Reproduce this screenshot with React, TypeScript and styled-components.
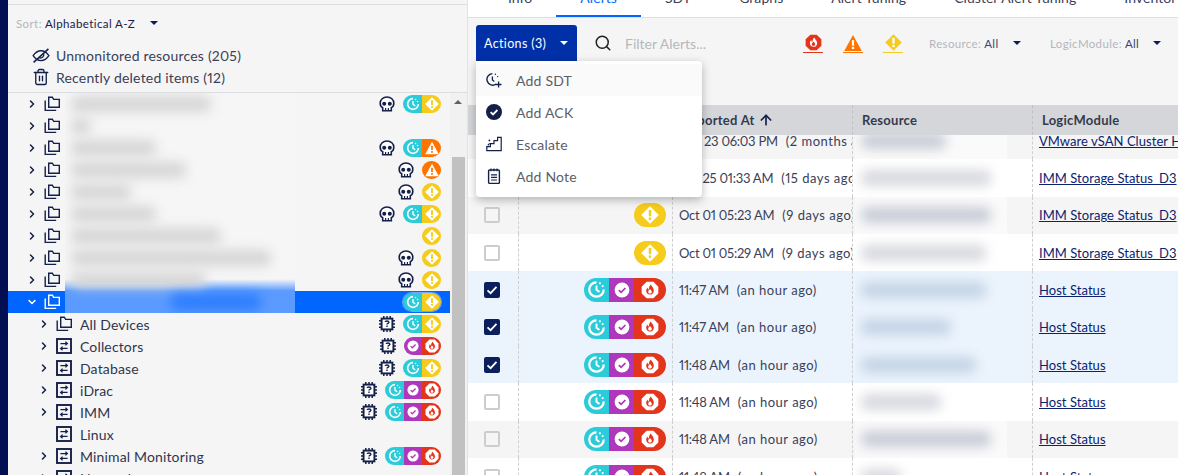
import React from "react";
import styled, { createGlobalStyle } from "styled-components";
import { ArrowUp, ChevronDown, ChevronRight, Search, Trash2 } from "lucide-react";

const NAVY = "#14204a";
const TEAL = "#2ccbd9";
const PURPLE = "#ae37bc";
const RED = "#e2351b";
const YELLOW = "#f6cc1c";
const ORANGE = "#ff7300";

const GlobalStyle = createGlobalStyle`
  html, body {
    margin: 0;
    padding: 0;
    background: #fff;
    overflow: hidden;
  }
  * {
    box-sizing: border-box;
  }
`;

const Page = styled.div`
  width: 1178px;
  height: 475px;
  display: flex;
  overflow: hidden;
  font-family: "Lato", "Open Sans", sans-serif;
  font-variant-numeric: proportional-nums;
  color: ${NAVY};
`;

const SideNav = styled.div`
  width: 8px;
  flex: none;
  background: #020f52;
`;

const LeftPanel = styled.div`
  width: 460px;
  flex: none;
  display: flex;
  flex-direction: column;
  background: #f5f5f5;
  padding-top: 4px;
  border-right: 1px solid #e3e3e3;
`;

const SortRow = styled.div`
  height: 38px;
  border-top: 1px solid #dcdde0;
  padding: 0 0 1px 8px;
  display: flex;
  align-items: center;
  font-size: 11.5px;
  letter-spacing: 0.4px;
`;

const FilterLabel = styled.span`
  color: #b4b6bc;
  margin-right: 3px;
`;

const Caret = styled.span<{ $gap: number; $color?: string }>`
  width: 0;
  height: 0;
  margin-left: ${(p) => p.$gap}px;
  border-left: 4px solid transparent;
  border-right: 4px solid transparent;
  border-top: 4px solid ${(p) => p.$color || "#0b1c5c"};
`;

const SpecialList = styled.div`
  height: 51px;
  padding: 2px 0 0 24px;
  border-bottom: 1px solid #dcdde0;
`;

const SpecialItem = styled.div`
  height: 22px;
  display: flex;
  align-items: center;
  gap: 6px;
  font-size: 14px;
  letter-spacing: 0.2px;
  color: #3a4058;
`;

const TreeWrap = styled.div`
  flex: 1;
  display: flex;
  min-height: 0;
  overflow: hidden;
`;

const Tree = styled.div`
  width: 442px;
  flex: none;
  position: relative;
`;

const TreeRow = styled.div<{ $selected?: boolean; $depth?: number }>`
  height: 22px;
  display: flex;
  align-items: center;
  padding: 0 9px 0 ${(p) => 18 + (p.$depth || 0) * 12}px;
  background: ${(p) => (p.$selected ? "#0066ff" : "transparent")};
  color: ${(p) => (p.$selected ? "#fff" : NAVY)};
`;

const Chevron = styled.span`
  width: 12px;
  height: 12px;
  flex: none;
  display: flex;
  margin-right: 6px;
  color: inherit;
`;

const RowIcon = styled.span`
  width: 16px;
  height: 16px;
  flex: none;
  display: flex;
`;

const RowName = styled.span`
  margin-left: 8px;
  font-size: 14px;
  letter-spacing: 0.15px;
  color: #2f3550;
`;

const RowStatus = styled.div`
  margin-left: auto;
  display: flex;
  align-items: center;
  gap: 8px;
`;

const StatusIcon = styled.span`
  width: 16px;
  height: 16px;
  display: flex;
`;

const Pill = styled.div<{ $ring?: boolean }>`
  display: flex;
  border-radius: 12px;
  overflow: hidden;
  ${(p) => (p.$ring ? "box-shadow: 0 0 0 1px #6fa6ff;" : "")}
`;

const Segment = styled.span<{ $w: number; $h: number; $bg: string }>`
  width: ${(p) => p.$w}px;
  height: ${(p) => p.$h}px;
  background: ${(p) => p.$bg};
  display: flex;
  align-items: center;
  justify-content: center;
`;

/* the names that are smudged out in the screenshot */
const BlurPatch = styled.div`
  position: absolute;
  left: 57px;
  top: 0;
  width: 230px;
  height: 220px;
  overflow: hidden;
  background: linear-gradient(
    to bottom,
    #f6f6f6 0,
    #f6f6f6 186px,
    #a9c9fb 192px,
    #5b9bff 198px,
    #5b9bff 220px
  );
`;

const BlurRow = styled.div`
  height: 22px;
  display: flex;
  align-items: center;
  padding-left: 6px;
`;

const Smudge = styled.div<{ $color?: string }>`
  height: 16px;
  background: ${(p) => p.$color || "#d6d6d6"};
  filter: blur(6px);
  border-radius: 6px;
`;

const Scrollbar = styled.div`
  width: 17px;
  flex: none;
  position: relative;
  background: #f1f1f1;
`;

const ScrollArrow = styled.span`
  position: absolute;
  left: 4px;
  top: 7px;
  width: 0;
  height: 0;
  border-left: 4px solid transparent;
  border-right: 4px solid transparent;
  border-bottom: 4px solid #606060;
`;

const ScrollThumb = styled.div`
  position: absolute;
  left: 2px;
  top: 64px;
  bottom: 0;
  width: 13px;
  background: #c1c1c1;
`;

const RightPane = styled.div`
  flex: 1;
  min-width: 0;
  display: flex;
  flex-direction: column;
  position: relative;
  overflow: hidden;
`;

const Tabs = styled.div`
  height: 18px;
  flex: none;
  display: flex;
  padding-left: 16px;
  background: #fff;
  border-bottom: 1px solid #dcdfe6;
  white-space: nowrap;
`;

const Tab = styled.div<{ $active?: boolean }>`
  height: 32px;
  margin-top: -15px;
  padding: 3px 24px 0;
  line-height: 20px;
  font-size: 14px;
  letter-spacing: 0.05px;
  color: ${(p) => (p.$active ? "#0066ff" : "#3a4058")};
  border-bottom: 2px solid ${(p) => (p.$active ? "#0066ff" : "transparent")};
`;

const Toolbar = styled.div`
  height: 87px;
  flex: none;
  padding: 7px 0 0 8px;
  display: flex;
  align-items: flex-start;
  background: #f5f5f5;
`;

const ActionsButton = styled.div`
  width: 101px;
  height: 36px;
  flex: none;
  display: flex;
  align-items: center;
  padding-left: 8px;
  border-radius: 3px 3px 0 0;
  background: #0030a8;
  color: #fff;
  font-size: 12.5px;
  letter-spacing: 0.35px;
`;

const SearchBox = styled.div`
  height: 36px;
  display: flex;
  align-items: center;
  margin-left: 17px;
  width: 209px;
  color: #b7b8bc;
  font-size: 14px;
  gap: 13px;
`;

const SeverityGroup = styled.div`
  display: flex;
  gap: 20px;
  margin-right: 26px;
`;

const SeverityFilter = styled.div<{ $color: string }>`
  width: 20px;
  height: 28px;
  display: flex;
  align-items: center;
  justify-content: center;
  border-bottom: 1px solid ${(p) => p.$color};
  padding-top: 8px;
`;

const Dropdown = styled.div<{ $width: number }>`
  width: ${(p) => p.$width}px;
  height: 36px;
  display: flex;
  align-items: center;
  font-size: 11.5px;
  letter-spacing: 0.35px;
  color: #3a4770;
  white-space: nowrap;
`;

const ActionsMenu = styled.div`
  position: absolute;
  left: 8px;
  top: 61px;
  width: 226px;
  height: 136px;
  padding: 3px 0;
  z-index: 5;
  background: #fff;
  border-radius: 0 4px 4px 4px;
  box-shadow: 0 3px 10px rgba(0, 0, 0, 0.28);
`;

const MenuItem = styled.div<{ $hover?: boolean }>`
  height: 32px;
  display: flex;
  align-items: center;
  gap: 14px;
  padding-left: 10px;
  font-size: 14px;
  letter-spacing: 0.2px;
  color: #5b5e68;
  background: ${(p) => (p.$hover ? "#fafafa" : "transparent")};
`;

const TableHead = styled.div`
  height: 30px;
  flex: none;
  display: grid;
  grid-template-columns: 50px 154px 180px 180px 1fr;
  background: #d5d6d9;
  position: relative;
  z-index: 1;
`;

const HeadCell = styled.div<{ $dashed?: boolean }>`
  display: flex;
  align-items: center;
  gap: 3px;
  padding-left: 9px;
  font-size: 13px;
  font-weight: 700;
  letter-spacing: 0.25px;
  color: #333a4d;
  border-left: ${(p) => (p.$dashed ? "1px dashed #bfc0c4" : "none")};
  white-space: nowrap;
`;

const TableBody = styled.div`
  margin-top: -13px;
`;

type Tone = "white" | "grey" | "selected";

const toneBg: Record<Tone, string> = { white: "#fff", grey: "#f5f5f5", selected: "#ebf4fd" };
const tonePatch: Record<Tone, string> = { white: "#fff", grey: "#fafafa", selected: "#ebf4fd" };
const toneSmudge: Record<Tone, string> = { white: "#d8d9df", grey: "#c9ccd7", selected: "#c4d3e5" };

const Row = styled.div<{ $tone: Tone }>`
  height: 37.33px;
  display: grid;
  grid-template-columns: 50px 154px 180px 180px 1fr;
  background: ${(p) => toneBg[p.$tone]};
`;

const Cell = styled.div<{ $dashed?: boolean; $end?: boolean; $pad?: number }>`
  display: flex;
  align-items: center;
  min-width: 0;
  overflow: hidden;
  white-space: nowrap;
  padding: 0 ${(p) => (p.$end ? 6 : 0)}px 0 ${(p) => p.$pad ?? 0}px;
  justify-content: ${(p) => (p.$end ? "flex-end" : "flex-start")};
  border-left: ${(p) => (p.$dashed ? "1px dashed #cfcfcf" : "none")};
  font-size: 13px;
  letter-spacing: 0.5px;
  color: #3a4058;
`;

const ResourcePatch = styled.div<{ $tone: Tone }>`
  width: 152px;
  height: 100%;
  margin-left: 2px;
  padding-left: 6px;
  display: flex;
  align-items: center;
  overflow: hidden;
  background: ${(p) => tonePatch[p.$tone]};
`;

const Box = styled.span<{ $checked?: boolean }>`
  width: 16px;
  height: 16px;
  margin-left: 16px;
  border-radius: 2px;
  display: flex;
  align-items: center;
  justify-content: center;
  border: 2px solid ${(p) => (p.$checked ? "#0a1f5c" : "#cdcdcd")};
  background: ${(p) => (p.$checked ? "#0a1f5c" : "transparent")};
`;

const ModuleLink = styled.a`
  color: #0b2370;
  letter-spacing: 0.05px;
  text-decoration: underline;
`;

const AlertTime = styled.span`
  margin-right: 8px;
  letter-spacing: -0.25px;
`;

const IconSvg = styled.svg.attrs({ viewBox: "0 0 16 16", fill: "none" })<{ $size?: number }>`
  width: ${(p) => p.$size || 16}px;
  height: ${(p) => p.$size || 16}px;
  flex: none;
`;

const FolderIcon = ({ color }: { color: string }) => (
  <IconSvg stroke={color} strokeWidth="1.4">
    <path d="M4.7 1.2h3.6l1.4 2.2h5.6v7.8H4.7z" />
    <path d="M1.2 4.6v9.8h11" />
  </IconSvg>
);

const GroupIcon = () => (
  <IconSvg stroke={NAVY}>
    <rect x="1" y="1" width="14" height="14" strokeWidth="1.9" />
    <path d="M4.4 5.6h7M9.4 3.8 11.4 5.6 9.4 7.4M11.6 10.4h-7M6.6 8.6l-2 1.8 2 1.8" strokeWidth="1.2" />
  </IconSvg>
);

const SkullIcon = () => (
  <IconSvg>
    <path
      d="M8 1C4.1 1 1.2 3.6 1.2 7.3c0 2.1.8 3.6 2.5 4.5v2.9h8.6v-2.9c1.7-.9 2.5-2.4 2.5-4.5C14.8 3.6 11.9 1 8 1z"
      fill="#fff"
      stroke={NAVY}
      strokeWidth="1.6"
    />
    <circle cx="5.2" cy="7.8" r="2" fill={NAVY} />
    <circle cx="10.8" cy="7.8" r="2" fill={NAVY} />
    <path d="M6.6 12v2.6M9.4 12v2.6" stroke={NAVY} strokeWidth="1.2" />
  </IconSvg>
);

const ChipIcon = () => (
  <IconSvg>
    <rect x="2.6" y="2.6" width="10.8" height="10.8" fill="#fff" stroke={NAVY} strokeWidth="1.9" />
    <path
      d="M4.8 0v2.6M8 0v2.6M11.2 0v2.6M4.8 13.4V16M8 13.4V16M11.2 13.4V16M0 4.8h2.6M0 8h2.6M0 11.2h2.6M13.4 4.8H16M13.4 8H16M13.4 11.2H16"
      stroke={NAVY}
      strokeWidth="1.5"
    />
    <path d="M6.2 6c0-.7.7-1 1.8-1s1.9.4 1.9 1.2c0 1.2-1.9 1.2-1.9 2.4" stroke={NAVY} strokeWidth="1.4" />
    <path d="M8 9.6v1.5" stroke={NAVY} strokeWidth="1.4" />
  </IconSvg>
);

const SdtGlyph = ({ size }: { size: number }) => (
  <IconSvg $size={size} stroke="#fff">
    <path d="M8 1.9a6.1 6.1 0 1 0 6.1 6.1" strokeWidth="1.9" />
    <path d="M8 4.6v3.7l2.5 1.9" strokeWidth="1.6" />
    <circle cx="10.9" cy="2.8" r=".9" fill="#fff" stroke="none" />
    <circle cx="13.2" cy="5.1" r=".9" fill="#fff" stroke="none" />
  </IconSvg>
);

const AckGlyph = ({ size }: { size: number }) => (
  <IconSvg $size={size}>
    <circle cx="8" cy="8" r="7.4" fill="#fff" />
    <path d="M4.8 8.2 7.1 10.4 11.4 6" stroke={PURPLE} strokeWidth="1.7" />
  </IconSvg>
);

const FireGlyph = ({ size, bg, fg }: { size: number; bg: string; fg: string }) => (
  <IconSvg $size={size}>
    <path d="M5 .6h6L15.4 5v6L11 15.4H5L.6 11V5z" fill={bg} />
    <path
      d="M8.8 3.2c.4 1.6 2.6 2.7 2.6 5.4 0 2-1.5 3.5-3.4 3.5S4.6 10.6 4.6 8.7c0-1.2.5-2.2 1.2-3 .1 1 .5 1.6 1.1 1.9.1-1.6.6-3.3 1.9-4.4zM8 7.4c-1 .7-1.6 1.5-1.6 2.3 0 .9.7 1.5 1.6 1.5s1.6-.6 1.6-1.5c0-.8-.7-1.6-1.6-2.3z"
      fill={fg}
      fillRule="evenodd"
    />
  </IconSvg>
);

const WarnGlyph = ({ size, bg, fg }: { size: number; bg: string; fg: string }) => (
  <IconSvg $size={size}>
    <path d="M8 .8 15.8 15H.2z" fill={bg} strokeLinejoin="round" />
    <path d="M8 5.4v5" stroke={fg} strokeWidth="2" />
    <path d="M8 11.4v2" stroke={fg} strokeWidth="2" />
  </IconSvg>
);

const InfoGlyph = ({ size, bg, fg }: { size: number; bg: string; fg: string }) => (
  <IconSvg $size={size}>
    <path d="M8 .2 15.8 8 8 15.8.2 8z" fill={bg} />
    <path d="M8 3.6v5.4" stroke={fg} strokeWidth="2.2" />
    <path d="M8 10.2v2.2" stroke={fg} strokeWidth="2.2" />
  </IconSvg>
);

const EyeOffIcon = () => (
  <IconSvg $size={18} stroke={NAVY} strokeWidth="1.2">
    <path d="M1 8.6C3 5.6 5.4 4.2 8 4.2s5 1.4 7 4.4c-2 3-4.4 4.4-7 4.4s-5-1.4-7-4.4z" />
    <path d="M10.4 7.2a2.7 2.7 0 0 1-4 3" />
    <path d="M1.4 14.6 14.6 2.6" strokeWidth="1.4" />
  </IconSvg>
);

const AddSdtIcon = () => (
  <IconSvg stroke={NAVY}>
    <path d="M6.4 1.6a5.8 5.8 0 1 0 3.6 10.6" strokeWidth="1.4" />
    <path d="M6.4 4.4v3.6l1.9 1.5" strokeWidth="1.3" />
    <circle cx="9.4" cy="2.2" r=".7" fill={NAVY} stroke="none" />
    <circle cx="11.7" cy="4.6" r=".7" fill={NAVY} stroke="none" />
    <path d="M12.6 9.6v5.8M9.7 12.5h5.8" strokeWidth="1.3" />
  </IconSvg>
);

const AddAckIcon = () => (
  <IconSvg>
    <circle cx="8" cy="8" r="8" fill={NAVY} />
    <path d="M4.6 8.2 7 10.4 11.4 6" stroke="#fff" strokeWidth="1.8" />
  </IconSvg>
);

const EscalateIcon = () => (
  <IconSvg stroke={NAVY} strokeWidth="1.2">
    <path d="M.8 14.6V10.6h3.6V7.6h3.6V4.6h3.6V1.4h3.6v13.2z" />
    <circle cx="3.4" cy="4.4" r=".9" fill={NAVY} stroke="none" />
    <path d="M3.6 7.4 1.8 9.4" />
  </IconSvg>
);

const NoteIcon = () => (
  <IconSvg>
    <g stroke={NAVY}>
      <rect x="2.6" y="2" width="10.8" height="13.4" rx="1" strokeWidth="1.4" />
      <path d="M5 .4v2.8M8 .4v2.8M11 .4v2.8" strokeWidth="1.2" />
      <path d="M5 6.8h6M5 9.4h6M5 12h6" strokeWidth="1.2" />
    </g>
  </IconSvg>
);

const CheckMark = () => (
  <svg width="12" height="12" viewBox="0 0 12 12" fill="none">
    <path d="M1.5 6.3 4.6 9.2 10.5 2.8" stroke="#fff" strokeWidth="1.8" />
  </svg>
);

type Sev = "sdt" | "ack" | "crit" | "warn" | "info";
const sevColors: Record<Sev, string> = {
  sdt: TEAL,
  ack: PURPLE,
  crit: RED,
  warn: ORANGE,
  info: YELLOW,
};

const glyph = (s: Sev, size: number) => {
  const c = sevColors[s];
  if (s === "sdt") return <SdtGlyph size={size} />;
  if (s === "ack") return <AckGlyph size={size} />;
  if (s === "crit") return <FireGlyph size={size} bg="#fff" fg={c} />;
  if (s === "warn") return <WarnGlyph size={size} bg="#fff" fg={c} />;
  return <InfoGlyph size={size} bg="#fff" fg={c} />;
};

const StatusPill = ({ items, ring }: { items: Sev[]; ring?: boolean }) => (
  <Pill $ring={ring}>
    {items.map((s, i) => (
      <Segment key={i} $w={s === "ack" ? 18 : 19} $h={18} $bg={sevColors[s]}>
        {glyph(s, s === "ack" ? 12 : 14)}
      </Segment>
    ))}
  </Pill>
);

const AlertPill = ({ items }: { items: Sev[] }) => (
  <Pill>
    {items.map((s, i) => (
      <Segment key={i} $w={i === items.length - 1 ? 32 : 25} $h={24} $bg={sevColors[s]}>
        {glyph(s, s === "ack" ? 16 : s === "sdt" ? 19 : 18)}
      </Segment>
    ))}
  </Pill>
);

type TreeItem = {
  name?: string;
  smudge?: number;
  group?: boolean;
  depth?: number;
  noChevron?: boolean;
  selected?: boolean;
  mark?: "skull" | "chip";
  sev: Sev[];
};

const tree: TreeItem[] = [
  { smudge: 140, mark: "skull", sev: ["sdt", "info"] },
  { smudge: 20, sev: [] },
  { smudge: 85, mark: "skull", sev: ["sdt", "warn"] },
  { smudge: 115, mark: "skull", sev: ["warn"] },
  { smudge: 60, mark: "skull", sev: ["info"] },
  { smudge: 85, mark: "skull", sev: ["sdt", "info"] },
  { smudge: 150, sev: ["info"] },
  { smudge: 200, mark: "skull", sev: ["info"] },
  { smudge: 135, mark: "skull", sev: ["info"] },
  { selected: true, sev: ["sdt", "info"] },
  { name: "All Devices", depth: 1, mark: "chip", sev: ["sdt", "info"] },
  { name: "Collectors", group: true, depth: 1, mark: "chip", sev: ["ack", "crit"] },
  { name: "Database", group: true, depth: 1, mark: "chip", sev: ["sdt", "info"] },
  { name: "iDrac", group: true, depth: 1, mark: "chip", sev: ["sdt", "ack", "crit"] },
  { name: "IMM", group: true, depth: 1, mark: "chip", sev: ["sdt", "ack", "crit"] },
  { name: "Linux", group: true, depth: 1, noChevron: true, sev: [] },
  { name: "Minimal Monitoring", group: true, depth: 1, mark: "chip", sev: ["sdt", "ack", "crit"] },
  { name: "Networks", group: true, depth: 1, sev: [] },
];

type AlertRow = {
  tone: Tone;
  checked?: boolean;
  sev: Sev[];
  time: string;
  ago: string;
  smudge: number;
  module: string;
};

const hostRow = (tone: Tone, time: string, smudge: number, checked?: boolean): AlertRow => ({
  tone,
  checked,
  sev: ["sdt", "ack", "crit"],
  time,
  ago: "(an hour ago)",
  smudge,
  module: "Host Status",
});

const alerts: AlertRow[] = [
  { tone: "grey", sev: ["info"], time: "Aug 23 06:03 PM", ago: "(2 months ago)", smudge: 85, module: "VMware vSAN Cluster Health" },
  { tone: "white", sev: ["info"], time: "Sep 25 01:33 AM", ago: "(15 days ago)", smudge: 130, module: "IMM Storage Status_D3" },
  { tone: "grey", sev: ["info"], time: "Oct 01 05:23 AM", ago: "(9 days ago)", smudge: 130, module: "IMM Storage Status_D3" },
  { tone: "white", sev: ["info"], time: "Oct 01 05:29 AM", ago: "(9 days ago)", smudge: 125, module: "IMM Storage Status_D3" },
  hostRow("selected", "11:47 AM", 125, true),
  hostRow("selected", "11:47 AM", 90, true),
  hostRow("selected", "11:48 AM", 115, true),
  hostRow("white", "11:48 AM", 80),
  hostRow("grey", "11:48 AM", 130),
  hostRow("white", "11:48 AM", 40),
];

const App = () => {
  return (
    <Page>
      <GlobalStyle />
      <SideNav />
      <LeftPanel>
        <SortRow>
          <FilterLabel>Sort:</FilterLabel>
          Alphabetical A-Z
          <Caret $gap={15} />
        </SortRow>
        <SpecialList>
          <SpecialItem>
            <EyeOffIcon />
            Unmonitored resources (205)
          </SpecialItem>
          <SpecialItem>
            <Trash2 size={18} strokeWidth={1.8} color={NAVY} />
            Recently deleted items (12)
          </SpecialItem>
        </SpecialList>
        <TreeWrap>
          <Tree>
            {tree.map((t, i) => (
              <TreeRow key={i} $selected={t.selected} $depth={t.depth}>
                <Chevron>
                  {t.noChevron ? null : t.selected ? (
                    <ChevronDown size={12} strokeWidth={3} />
                  ) : (
                    <ChevronRight size={12} strokeWidth={3} />
                  )}
                </Chevron>
                <RowIcon>
                  {t.group ? <GroupIcon /> : <FolderIcon color={t.selected ? "#fff" : NAVY} />}
                </RowIcon>
                {t.name && <RowName>{t.name}</RowName>}
                <RowStatus>
                  {t.mark && (
                    <StatusIcon>{t.mark === "skull" ? <SkullIcon /> : <ChipIcon />}</StatusIcon>
                  )}
                  {t.sev.length > 0 && <StatusPill items={t.sev} ring={t.selected} />}
                </RowStatus>
              </TreeRow>
            ))}
            <BlurPatch>
              {tree.slice(0, 10).map((t, i) => (
                <BlurRow key={i}>
                  {t.smudge && <Smudge style={{ width: t.smudge }} />}
                  {t.selected && <Smudge $color="#2b7cff" style={{ width: 90, marginLeft: 100 }} />}
                </BlurRow>
              ))}
            </BlurPatch>
          </Tree>
          <Scrollbar>
            <ScrollArrow />
            <ScrollThumb />
          </Scrollbar>
        </TreeWrap>
      </LeftPanel>
      <RightPane>
        <Tabs>
          {["Info", "Alerts", "SDT", "Graphs", "Alert Tuning", "Cluster Alert Tuning", "Inventory"].map((t) => (
            <Tab key={t} $active={t === "Alerts"}>
              {t}
            </Tab>
          ))}
        </Tabs>
        <Toolbar>
          <ActionsButton>
            Actions (3)
            <Caret $gap={14} $color="#fff" />
          </ActionsButton>
          <SearchBox>
            <Search size={18} strokeWidth={2} color="#222" />
            Filter Alerts...
          </SearchBox>
          <SeverityGroup>
            <SeverityFilter $color={RED}>
              <FireGlyph size={17} bg={RED} fg="#fff" />
            </SeverityFilter>
            <SeverityFilter $color={ORANGE}>
              <WarnGlyph size={18} bg={ORANGE} fg="#fff" />
            </SeverityFilter>
            <SeverityFilter $color={YELLOW}>
              <InfoGlyph size={17} bg={YELLOW} fg="#fff" />
            </SeverityFilter>
          </SeverityGroup>
          <Dropdown $width={121}>
            <FilterLabel>Resource:</FilterLabel>
            All
            <Caret $gap={14} />
          </Dropdown>
          <Dropdown $width={120}>
            <FilterLabel>LogicModule:</FilterLabel>
            All
            <Caret $gap={14} />
          </Dropdown>
        </Toolbar>
        <ActionsMenu>
          <MenuItem $hover>
            <AddSdtIcon />
            Add SDT
          </MenuItem>
          <MenuItem>
            <AddAckIcon />
            Add ACK
          </MenuItem>
          <MenuItem>
            <EscalateIcon />
            Escalate
          </MenuItem>
          <MenuItem>
            <NoteIcon />
            Add Note
          </MenuItem>
        </ActionsMenu>
        <TableHead>
          <HeadCell />
          <HeadCell $dashed />
          <HeadCell $dashed>
            Reported At
            <ArrowUp size={16} strokeWidth={2.5} color={NAVY} />
          </HeadCell>
          <HeadCell $dashed>Resource</HeadCell>
          <HeadCell $dashed>LogicModule</HeadCell>
        </TableHead>
        <TableBody>
          {alerts.map((a, i) => (
            <Row key={i} $tone={a.tone}>
              <Cell>
                <Box $checked={a.checked}>{a.checked && <CheckMark />}</Box>
              </Cell>
              <Cell $dashed $end>
                <AlertPill items={a.sev} />
              </Cell>
              <Cell $dashed $pad={6}>
                <AlertTime>{a.time}</AlertTime>
                {a.ago}
              </Cell>
              <Cell $dashed>
                <ResourcePatch $tone={a.tone}>
                  <Smudge $color={toneSmudge[a.tone]} style={{ width: a.smudge }} />
                </ResourcePatch>
              </Cell>
              <Cell $dashed $pad={6}>
                <ModuleLink>{a.module}</ModuleLink>
              </Cell>
            </Row>
          ))}
        </TableBody>
      </RightPane>
    </Page>
  );
};

export default App;
